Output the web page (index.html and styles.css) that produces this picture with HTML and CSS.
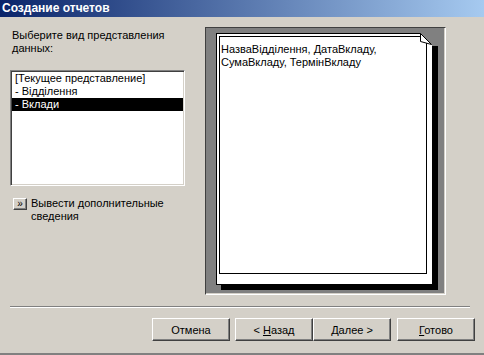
FILE: index.html
```html
<!DOCTYPE html>
<html lang="ru">
<head>
  <meta charset="UTF-8" />
  <title>Создание отчетов</title>
  <link rel="stylesheet" href="styles.css">
</head>
<body>

  <div class="window">
    <div class="titlebar">Создание отчетов</div>

    <div class="main">
      <div class="left">
        <p class="prompt">Выберите вид представления данных:</p>

        <ul class="listbox">
          <li>[Текущее представление]</li>
          <li>- Відділення</li>
          <li class="selected">- Вклади</li>
        </ul>

        <div class="more">
          <span class="small-btn">&raquo;</span>
          <span class="more-text">Вывести дополнительные сведения</span>
        </div>
      </div>

      <div class="preview">
        <div class="paper">
          <div class="paper-inner">НазваВідділення, ДатаВкладу, СумаВкладу, ТермінВкладу</div>
          <svg class="fold" width="19" height="13" viewBox="0 0 19 13">
            <polygon points="0,0 19,0 19,13 12,13 12,12" fill="#808080" />
            <polygon points="0.5,0.5 0.5,8.5 11.5,11.5" fill="#fff" stroke="#000" stroke-width="1" />
          </svg>
        </div>
      </div>
    </div>

    <div class="separator"></div>

    <div class="buttons">
      <button class="btn cancel">Отмена</button>
      <div class="pair">
        <button class="btn">&lt; <u>Н</u>азад</button>
        <button class="btn"><u>Д</u>алее &gt;</button>
      </div>
      <button class="btn"><u>Г</u>отово</button>
    </div>
  </div>

</body>
</html>
```

FILE: styles.css
```css
body { margin: 0; background: #d4d0c8; font-family: "Liberation Sans", Arial, sans-serif; font-size: 11px; color: #000; }
.window { width: 484px; height: 355px; box-sizing: border-box; background: #d4d0c8; border-bottom: 2px solid #808080; }

.titlebar { height: 17px; line-height: 17px; padding-left: 2px; color: #fff; font-weight: bold; font-size: 12px;
  background: linear-gradient(to right, #0a246a, #a6caf0); }

.main { display: flex; padding: 10px 0 0 10px; }
.left { width: 175px; margin-right: 20px; }
.prompt { margin: 2px 0 15px 2px; line-height: 13px; }

.listbox { list-style: none; margin: 0; padding: 1px 0 0 0; height: 113px; background: #fff;
  border: 1px solid; border-color: #808080 #fff #fff #808080; box-shadow: inset 1px 1px 0 #404040, inset -1px -1px 0 #d4d0c8; }
.listbox li { height: 13px; line-height: 13px; padding-left: 3px; margin: 0 1px; }
.listbox .selected { background: #000; color: #fff; }

.more { display: flex; align-items: flex-start; margin-top: 11px; padding-left: 3px; }
.small-btn { width: 12px; height: 10px; line-height: 9px; font-size: 10px; text-align: center; margin-right: 4px; margin-top: 1px;
  border: 1px solid; border-color: #fff #404040 #404040 #fff; box-shadow: inset -1px -1px 0 #808080; }
.more-text { line-height: 13px; width: 140px; }

.preview { background: #808080; padding: 5px 0 0 10px; box-sizing: border-box; width: 241px; height: 268px;
  border: 1px solid; border-color: #404040 #fff #fff #404040; box-shadow: inset -1px -1px 0 #d4d0c8; }
.paper { position: relative; width: 217px; height: 252px; box-sizing: border-box; background: #fff; border: 1px solid #000;
  box-shadow: 5px 5px 0 #000; padding: 2px 5px 10px 2px; }
.paper-inner { height: 100%; box-sizing: border-box; border: 1px solid #000; padding: 6px 0 0 1px; line-height: 13px; }
.fold { position: absolute; top: -1px; right: -7px; display: block; }

.separator { margin: 11px 14px 0 10px; border-top: 1px solid #808080; border-bottom: 1px solid #fff; }

.buttons { display: flex; justify-content: flex-end; padding: 10px 9px 0 0; }
.cancel { margin-right: 5px; }
.pair { display: flex; margin-right: 6px; }
.btn { width: 78px; height: 23px; padding: 0; background: #d4d0c8; font-family: inherit; font-size: 11px; color: #000;
  border: 1px solid; border-color: #fff #404040 #404040 #fff; box-shadow: inset -1px -1px 0 #808080; }
```
